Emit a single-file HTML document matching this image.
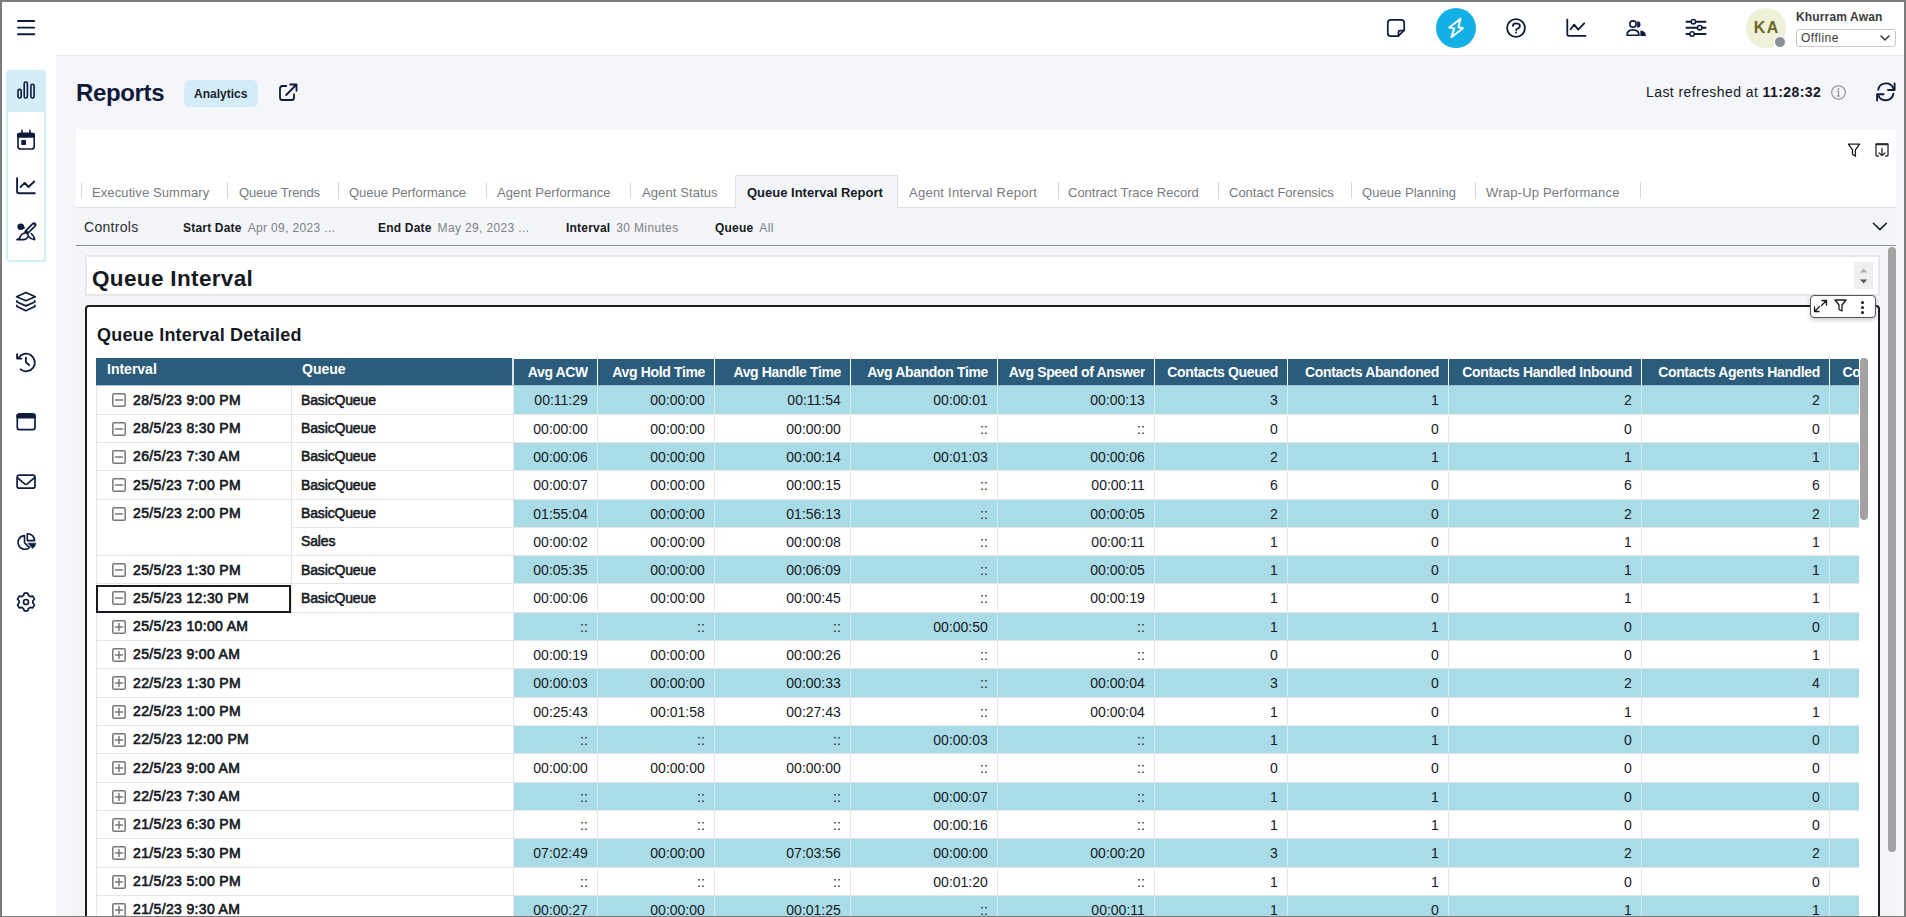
<!DOCTYPE html><html><head><meta charset="utf-8"><style>
*{box-sizing:border-box;margin:0;padding:0}
html,body{width:1906px;height:917px;overflow:hidden;background:#f5f6f9;font-family:"Liberation Sans",sans-serif;position:relative}
.a{position:absolute;white-space:nowrap}
.ic{position:absolute;overflow:visible}
.b{position:absolute}
.tab{position:absolute;top:185px;font-size:13px;line-height:16px;color:#777b80}
.sep{position:absolute;top:182px;width:1px;height:17px;background:#d5d7da}
.cl{position:absolute;top:221px;font-size:12px;line-height:14px;white-space:nowrap}
.cl b{color:#16191f;font-weight:700;letter-spacing:0.2px}
.cl i{font-style:normal;color:#7d8084;margin-left:6px;letter-spacing:0.35px}
.num{position:absolute;text-align:right;padding-right:9.2px;font-size:14px;color:#16191f;border-right:1px solid #e6e6e6;border-bottom:1px solid #e6e6e6;white-space:nowrap;overflow:hidden}
.bl{background:#a9dce6;border-right-color:#d2ebf0}
.hd{position:absolute;top:358px;height:27px;background:#2b5c7c;color:#fff;font-weight:700;font-size:14px;white-space:nowrap;overflow:hidden}
.lc{position:absolute;background:#fff;border-bottom:1px solid #e6e6e6;border-right:1px solid #e6e6e6;font-size:14px;color:#16191f;white-space:nowrap}
</style></head><body>
<div class="b" style="left:0;top:0;width:1906px;height:55px;background:#fff"></div>
<div class="b" style="left:56px;top:55px;width:1850px;height:1px;background:#e9eaed"></div>
<div class="b" style="left:0;top:54px;width:56px;height:870px;background:#fff"></div>
<svg class="ic" style="left:12px;top:14px;width:28px;height:28px" viewBox="12 14 28 28" fill="none" stroke="#0f1b3c" stroke-width="1.9" stroke-linecap="round" stroke-linejoin="round"><path d="M18 21H34.2M18 27.6H34.2M18 34.2H34.2"/></svg>
<svg class="ic" style="left:1384px;top:16px;width:24px;height:24px" viewBox="1384 16 24 24" fill="none" stroke="#0f1b3c" stroke-width="1.7" stroke-linecap="round" stroke-linejoin="round"><path d="M1390.8 19.8H1401.2Q1404.2 19.8 1404.2 22.8V30.2L1398.2 36.2H1390.8Q1387.8 36.2 1387.8 33.2V22.8Q1387.8 19.8 1390.8 19.8Z"/><path d="M1404 30.6H1400Q1398.4 30.6 1398.4 32.2V36"/></svg>
<div class="b" style="left:1436px;top:8px;width:40px;height:40px;border-radius:50%;background:#14b0e5"></div>
<svg class="ic" style="left:1440px;top:12px;width:32px;height:32px" viewBox="1440 12 32 32" fill="none" stroke="#fff" stroke-width="1.9" stroke-linecap="round" stroke-linejoin="round"><path d="M1460.5 18.8L1449.3 27.6L1454.3 28.4L1451.3 37.2L1463 28.2L1458.3 27.3Z"/></svg>
<svg class="ic" style="left:1504px;top:16px;width:24px;height:24px" viewBox="1504 16 24 24" fill="none" stroke="#0f1b3c" stroke-width="1.8" stroke-linecap="round" stroke-linejoin="round"><circle cx="1516" cy="28" r="8.9"/><path d="M1512.9 25.9Q1513 23.3 1516 23.3Q1519.9 23.3 1519.9 26Q1519.9 27.6 1518 28.5Q1516.1 29.3 1516.1 30"/><circle cx="1516.1" cy="32.6" r="1" fill="#0f1b3c" stroke="none"/></svg>
<svg class="ic" style="left:1564px;top:16px;width:24px;height:24px" viewBox="1564 16 24 24" fill="none" stroke="#0f1b3c" stroke-width="1.8" stroke-linecap="round" stroke-linejoin="round"><path d="M1567.3 19.6V34.3Q1567.3 35.9 1568.9 35.9H1585.5"/><path d="M1570.6 29.3L1574.2 24.6L1578.2 29.6L1584.2 23.3"/></svg>
<svg class="ic" style="left:1624px;top:18px;width:24px;height:20px" viewBox="1624 18 24 20" fill="none" stroke="#0f1b3c" stroke-width="2" stroke-linecap="round" stroke-linejoin="round"><circle cx="1633" cy="24.1" r="3.2" stroke-width="1.6"/><path d="M1637.2 21.2A3.25 3.25 0 0 1 1637.2 27.7Z" fill="#0f1b3c" stroke="none"/><path d="M1627 35.2Q1627 29.9 1633 29.9Q1639 29.9 1639 35.2Z" stroke-width="1.6"/><path d="M1640.4 30.4Q1645.9 30.6 1645.9 35.9H1640.4Z" fill="#0f1b3c" stroke="none"/></svg>
<svg class="ic" style="left:1684px;top:16px;width:24px;height:24px" viewBox="1684 16 24 24" fill="none" stroke="#0f1b3c" stroke-width="2" stroke-linecap="round" stroke-linejoin="round"><path d="M1686.5 21.7H1705.5M1686.5 27.7H1705.5M1686.5 34H1705.5" stroke-width="2"/><circle cx="1693.4" cy="21.7" r="2.2" fill="#fff" stroke-width="1.6"/><circle cx="1699.7" cy="27.7" r="2.2" fill="#fff" stroke-width="1.6"/><circle cx="1692.1" cy="34" r="2.2" fill="#fff" stroke-width="1.6"/></svg>
<div class="b" style="left:1746px;top:8px;width:40px;height:40px;border-radius:50%;background:#eef0d7"></div>
<div class="a" style="left:1746px;top:18px;width:40px;text-align:center;font-size:16px;line-height:20px;color:#6b6828;letter-spacing:1.5px;font-weight:700;text-indent:1.5px">KA</div>
<div class="b" style="left:1774px;top:36px;width:12px;height:12px;border-radius:50%;background:#8b8d96;border:1px solid #fff"></div>
<div class="a" style="left:1796px;top:10px;font-size:12px;line-height:15px;font-weight:700;color:#3a3b3e;letter-spacing:0.15px">Khurram Awan</div>
<div class="b" style="left:1796px;top:29px;width:100px;height:18px;border:1px solid #c7c9cc;border-radius:3px;background:#fff"></div>
<div class="a" style="left:1801px;top:31px;font-size:12px;line-height:14px;color:#3a3b3e;letter-spacing:0.5px">Offline</div>
<svg class="ic" style="left:1880px;top:35px;width:10px;height:7px" viewBox="0 0 10 7" fill="none" stroke="#333" stroke-width="1.5" stroke-linecap="round" stroke-linejoin="round"><path d="M1 1L5 5L9 1"/></svg>
<div class="b" style="left:6px;top:70px;width:40px;height:192px;border:2px solid #d3ecf9;border-radius:4px;background:#fff"></div>
<div class="b" style="left:6px;top:70px;width:40px;height:42px;background:#d3eef9;border-radius:4px 4px 0 0"></div>
<svg class="ic" style="left:12px;top:76px;width:28px;height:28px" viewBox="12 76 28 28" fill="none" stroke="#0f1b3c" stroke-width="1.6" stroke-linecap="round" stroke-linejoin="round"><rect x="18" y="89.4" width="3.2" height="8.6" rx="1.6"/><rect x="24.2" y="82" width="3.2" height="16" rx="1.6"/><rect x="30.9" y="84.3" width="3.2" height="13.7" rx="1.6"/></svg>
<svg class="ic" style="left:12px;top:126px;width:28px;height:28px" viewBox="12 126 28 28" fill="none" stroke="#0f1b3c" stroke-width="1.6" stroke-linecap="round" stroke-linejoin="round"><rect x="18" y="133.2" width="16.2" height="15.8" rx="2.6"/><path d="M22 130.4V133M29.9 130.4V133"/><path d="M18 133.5H34.2V137.2H18Z" fill="#0f1b3c" stroke-width="1"/><rect x="21.2" y="140" width="4.8" height="4.9" rx="1" fill="#0f1b3c" stroke="none"/></svg>
<svg class="ic" style="left:12px;top:172px;width:28px;height:28px" viewBox="12 172 28 28" fill="none" stroke="#0f1b3c" stroke-width="1.9" stroke-linecap="round" stroke-linejoin="round"><path d="M17.1 178.2V191.6Q17.1 193.3 18.8 193.3H34.8"/><path d="M20.6 187L24.7 182.9L28.5 187L34.2 181.5"/></svg>
<svg class="ic" style="left:12px;top:218px;width:28px;height:28px" viewBox="12 218 28 28" fill="none" stroke="#0f1b3c" stroke-width="1.6" stroke-linecap="round" stroke-linejoin="round"><path d="M34 224.8L26.8 232" stroke-width="5"/><path d="M33.6 225.2L28.2 230.6" stroke="#fff" stroke-width="1.5"/><path d="M26.2 232.8Q21.2 233.4 20.1 237Q19.6 239.3 16.9 239.6H23.6Q27.6 239.4 28.4 235.2Z" fill="#fff" stroke-width="1.6"/><circle cx="20.7" cy="226.7" r="3.3" fill="#0f1b3c" stroke="none"/><path d="M21.5 223.6L25.4 227.9L22.4 229.6Z" fill="#0f1b3c" stroke="none"/><path d="M31.2 233.5Q34.6 236.5 34.6 239.8Q30.8 239.2 28.9 236.7" stroke-width="1.6"/></svg>
<svg class="ic" style="left:12px;top:286px;width:28px;height:28px" viewBox="12 286 28 28" fill="none" stroke="#0f1b3c" stroke-width="1.7" stroke-linecap="round" stroke-linejoin="round"><path d="M25.9 292.6L35.2 296.8L25.9 300.8L16.6 296.8Z"/><path d="M17 300.8Q16.6 301.6 17 302L25.9 305.9L34.8 302Q35.2 301.6 34.8 300.8"/><path d="M17 305.4Q16.6 306.2 17 306.6L25.9 310.8L34.8 306.6Q35.2 306.2 34.8 305.4"/></svg>
<svg class="ic" style="left:12px;top:346px;width:28px;height:28px" viewBox="12 346 28 28" fill="none" stroke="#0f1b3c" stroke-width="1.8" stroke-linecap="round" stroke-linejoin="round"><path d="M18.6 357.8A8.8 8.8 0 1 1 20.6 369.4"/><path d="M17.1 354.1V358.6H21.4"/><path d="M25.9 357.6V362.2L29.1 365"/></svg>
<svg class="ic" style="left:12px;top:406px;width:28px;height:28px" viewBox="12 406 28 28" fill="none" stroke="#0f1b3c" stroke-width="1.7" stroke-linecap="round" stroke-linejoin="round"><rect x="17.3" y="413.9" width="17.7" height="15.7" rx="2.2"/><path d="M17.3 414.5H35V418H17.3Z" fill="#0f1b3c" stroke-width="1"/></svg>
<svg class="ic" style="left:12px;top:466px;width:28px;height:28px" viewBox="12 466 28 28" fill="none" stroke="#0f1b3c" stroke-width="1.7" stroke-linecap="round" stroke-linejoin="round"><rect x="17.1" y="475.2" width="17.9" height="13" rx="2.3"/><path d="M17.7 478L24.6 483.8Q25.9 484.8 27.2 483.8L34.6 477.6"/></svg>
<svg class="ic" style="left:12px;top:526px;width:28px;height:28px" viewBox="12 526 28 28" fill="none" stroke="#0f1b3c" stroke-width="1.6" stroke-linecap="round" stroke-linejoin="round"><path d="M24.5 535.6A6.85 6.85 0 1 0 29.4 547.6L24.5 542.8Z"/><path d="M27.3 533.7V540.6H34.6A7 7 0 0 0 27.3 533.7Z"/><path d="M28.2 543.2H35.8A7.3 7.3 0 0 1 32.7 548.6Z" fill="#0f1b3c" stroke-width="0.6"/></svg>
<svg class="ic" style="left:12px;top:588px;width:28px;height:28px" viewBox="12 588 28 28" fill="none" stroke="#0f1b3c" stroke-width="1.7" stroke-linecap="round" stroke-linejoin="round"><path d="M23.42 595.60 L24.28 593.17 L27.72 593.17 L28.58 595.60 L30.25 596.56 L32.79 596.10 L34.51 599.07 L32.83 601.04 L32.83 602.96 L34.51 604.93 L32.79 607.90 L30.25 607.44 L28.58 608.40 L27.72 610.83 L24.28 610.83 L23.42 608.40 L21.75 607.44 L19.21 607.90 L17.49 604.93 L19.17 602.96 L19.17 601.04 L17.49 599.07 L19.21 596.10 L21.75 596.56Z"/><circle cx="26" cy="602" r="2.5"/></svg>
<div class="a" style="left:76px;top:78px;font-size:24px;line-height:30px;font-weight:700;color:#101a3b;letter-spacing:-0.35px">Reports</div>
<div class="b" style="left:184px;top:80px;width:74px;height:27px;background:#d2edf9;border-radius:6px"></div>
<div class="a" style="left:194px;top:87px;font-size:12px;line-height:15px;font-weight:700;color:#1b1d2b">Analytics</div>
<svg class="ic" style="left:274px;top:79px;width:28px;height:28px" viewBox="274 79 28 28" fill="none" stroke="#0f1b3c" stroke-width="1.8" stroke-linecap="round" stroke-linejoin="round"><path d="M286.3 86H282.6Q280 86 280 88.6V97.4Q280 100 282.6 100H291.4Q294 100 294 97.4V94.3"/><path d="M290.2 84.5H296.5V90.8M296 85L286.2 95"/></svg>
<div class="a" style="left:1646px;top:84px;font-size:14px;line-height:17px;color:#16191f;letter-spacing:0.42px">Last refreshed at <b>11:28:32</b></div>
<svg class="ic" style="left:1831px;top:85px;width:15px;height:15px" viewBox="0 0 15 15" fill="none" stroke="#8a8a8a" stroke-width="1.1" stroke-linecap="round" stroke-linejoin="round"><circle cx="7.5" cy="7.5" r="6.8"/><path d="M7.5 6.5V11M6.3 11H8.7M6.5 6.5H7.5"/><circle cx="7.5" cy="4.3" r="0.4" fill="#888"/></svg>
<svg class="ic" style="left:1872px;top:78px;width:28px;height:28px" viewBox="1872 78 28 28" fill="none" stroke="#0f1b3c" stroke-width="1.9" stroke-linecap="round" stroke-linejoin="round"><path d="M1878.2 89.8A7.9 7.9 0 0 1 1893.4 88.6"/><path d="M1894.6 83.4V90H1888"/><path d="M1893.4 93.8A7.9 7.9 0 0 1 1878.2 95"/><path d="M1883.6 94.2H1877.1V100.6"/></svg>
<div class="b" style="left:76px;top:129px;width:1820px;height:800px;background:#fff"></div>
<svg class="ic" style="left:1844px;top:140px;width:20px;height:20px" viewBox="1844 140 20 20" fill="none" stroke="#1a1a1a" stroke-width="1.3" stroke-linecap="round" stroke-linejoin="round"><path d="M1848.4 144.2H1859.6L1855.4 149.8V156.2L1852.5 154.3V149.8Z"/></svg>
<svg class="ic" style="left:1872px;top:140px;width:20px;height:20px" viewBox="1872 140 20 20" fill="none" stroke="#2a2a2a" stroke-width="1.3" stroke-linecap="round" stroke-linejoin="round"><path d="M1878.4 156H1877Q1876 156 1876 155V145.2Q1876 144.1 1877 144.1H1887Q1888 144.1 1888 145.2V155Q1888 156 1887 156H1885.6"/><path d="M1876.2 144.3H1887.8" stroke-width="1.9"/><path d="M1882 148.3V155.4M1879.1 152.9L1882 155.6L1884.9 152.9"/></svg>
<div class="b" style="left:76px;top:207px;width:1820px;height:1px;background:#dfe1e4"></div>
<div class="b" style="left:735px;top:175px;width:163px;height:33px;background:#f4f5f8;border:1px solid #dfe1e4;border-bottom:none"></div>
<div class="tab" style="left:92px;letter-spacing:0.1px">Executive Summary</div>
<div class="tab" style="left:239px;letter-spacing:-0.12px">Queue Trends</div>
<div class="tab" style="left:349px;letter-spacing:0px">Queue Performance</div>
<div class="tab" style="left:497px;letter-spacing:0.1px">Agent Performance</div>
<div class="tab" style="left:642px;letter-spacing:0.1px">Agent Status</div>
<div class="tab" style="left:747px;color:#16191f;font-weight:700">Queue Interval Report</div>
<div class="tab" style="left:909px;letter-spacing:0.25px">Agent Interval Report</div>
<div class="tab" style="left:1068px;letter-spacing:0px">Contract Trace Record</div>
<div class="tab" style="left:1229px;letter-spacing:0px">Contact Forensics</div>
<div class="tab" style="left:1362px;letter-spacing:0.05px">Queue Planning</div>
<div class="tab" style="left:1486px;letter-spacing:0.2px">Wrap-Up Performance</div>
<div class="sep" style="left:81px"></div>
<div class="sep" style="left:227px"></div>
<div class="sep" style="left:338px"></div>
<div class="sep" style="left:486px"></div>
<div class="sep" style="left:630px"></div>
<div class="sep" style="left:1058px"></div>
<div class="sep" style="left:1218px"></div>
<div class="sep" style="left:1351px"></div>
<div class="sep" style="left:1475px"></div>
<div class="sep" style="left:1640px"></div>
<div class="b" style="left:76px;top:208px;width:1820px;height:38px;background:#f4f5f8;border-bottom:1px solid #8e9196"></div>
<div class="a" style="left:84px;top:219px;font-size:14px;line-height:17px;color:#2b2d31;letter-spacing:0.3px">Controls</div>
<div class="cl" style="left:183px"><b>Start Date</b><i>Apr 09, 2023 ...</i></div>
<div class="cl" style="left:378px"><b>End Date</b><i>May 29, 2023 ...</i></div>
<div class="cl" style="left:566px"><b>Interval</b><i>30 Minutes</i></div>
<div class="cl" style="left:715px"><b>Queue</b><i>All</i></div>
<svg class="ic" style="left:1868px;top:218px;width:24px;height:16px" viewBox="1868 218 24 16" fill="none" stroke="#16191f" stroke-width="1.5" stroke-linecap="round" stroke-linejoin="round"><path d="M1873.4 223.2L1879.9 229.6L1886.4 223.2"/></svg>
<div class="b" style="left:76px;top:246px;width:1820px;height:680px;background:#f4f5f9"></div>
<div class="b" style="left:1888px;top:247px;width:8px;height:605px;background:#a3a3a6;border-radius:4px"></div>
<div class="b" style="left:85px;top:255px;width:1795px;height:41px;background:#fff;border:2px solid #e7e8ea"></div>
<div class="a" style="left:92px;top:265.5px;font-size:22.5px;line-height:26px;font-weight:700;color:#16191f;letter-spacing:0.35px">Queue Interval</div>
<div class="b" style="left:1854px;top:262px;width:19px;height:27px;background:#efefef"></div>
<svg class="ic" style="left:1854px;top:262px;width:19px;height:27px" viewBox="1854 262 19 27" fill="none" stroke="#0f1b3c" stroke-width="2" stroke-linecap="round" stroke-linejoin="round"><path d="M1860 272.5L1863.6 268.5L1867.2 272.5Z" fill="#aaa" stroke="none"/><path d="M1860 279.5L1863.6 283.5L1867.2 279.5Z" fill="#555" stroke="none"/></svg>
<div class="b" style="left:85px;top:305px;width:1795px;height:640px;background:#fff;border:2.5px solid #1e1f22;border-radius:4px"></div>
<div class="a" style="left:97px;top:324px;font-size:18px;line-height:22px;font-weight:700;color:#16191f;letter-spacing:0.2px">Queue Interval Detailed</div>
<div class="b" style="left:1810px;top:294.5px;width:66px;height:23px;background:#fff;border:1px solid #555;border-radius:4px;box-shadow:0 2px 4px rgba(0,0,0,0.2)"></div>
<svg class="ic" style="left:1813px;top:299px;width:15px;height:14px" viewBox="0 0 15 14" fill="none" stroke="#16191f" stroke-width="1.3" stroke-linecap="round" stroke-linejoin="round"><path d="M9 1.5H13.5V6M13.5 1.5L8.5 6.5M6 12.5H1.5V8M1.5 12.5L6.5 7.5"/></svg>
<svg class="ic" style="left:1834px;top:299px;width:13px;height:13px" viewBox="0 0 13 13" fill="none" stroke="#16191f" stroke-width="1.3" stroke-linecap="round" stroke-linejoin="round"><path d="M1 1H12L8 6V12L5 10.5V6Z"/></svg>
<div class="b" style="left:1861px;top:301px;width:3px;height:3px;border-radius:50%;background:#16191f"></div><div class="b" style="left:1861px;top:306px;width:3px;height:3px;border-radius:50%;background:#16191f"></div><div class="b" style="left:1861px;top:311px;width:3px;height:3px;border-radius:50%;background:#16191f"></div>
<div class="b" style="left:96px;top:358px;width:1763px;height:560px;overflow:hidden">
<div class="hd" style="left:0;top:0;width:416px;"></div>
<div class="b" style="left:416px;top:0;width:2px;height:27px;background:#dde3e7"></div>
<div class="b" style="left:0;top:27px;width:1764px;height:1.3px;background:#a3c3d2"></div>
<div class="a" style="left:11px;top:3px;font-size:14px;line-height:16px;font-weight:700;color:#fff">Interval</div>
<div class="a" style="left:206px;top:3px;font-size:14px;line-height:16px;font-weight:700;color:#fff">Queue</div>
<div class="hd" style="left:418px;top:1px;width:83px;height:26px"></div>
<div class="a" style="left:418px;top:6.300000000000011px;width:74px;text-align:right;font-size:14px;line-height:16px;font-weight:700;color:#fff;overflow:hidden;letter-spacing:-0.35px">Avg ACW</div>
<div class="hd" style="left:502px;top:1px;width:116px;height:26px"></div>
<div class="a" style="left:502px;top:6.300000000000011px;width:107px;text-align:right;font-size:14px;line-height:16px;font-weight:700;color:#fff;overflow:hidden;letter-spacing:-0.35px">Avg Hold Time</div>
<div class="hd" style="left:619px;top:1px;width:135px;height:26px"></div>
<div class="a" style="left:619px;top:6.300000000000011px;width:126px;text-align:right;font-size:14px;line-height:16px;font-weight:700;color:#fff;overflow:hidden;letter-spacing:-0.35px">Avg Handle Time</div>
<div class="hd" style="left:755px;top:1px;width:146px;height:26px"></div>
<div class="a" style="left:755px;top:6.300000000000011px;width:137px;text-align:right;font-size:14px;line-height:16px;font-weight:700;color:#fff;overflow:hidden;letter-spacing:-0.35px">Avg Abandon Time</div>
<div class="hd" style="left:902px;top:1px;width:156px;height:26px"></div>
<div class="a" style="left:902px;top:6.300000000000011px;width:147px;text-align:right;font-size:14px;line-height:16px;font-weight:700;color:#fff;overflow:hidden;letter-spacing:-0.35px">Avg Speed of Answer</div>
<div class="hd" style="left:1059px;top:1px;width:132px;height:26px"></div>
<div class="a" style="left:1059px;top:6.300000000000011px;width:123px;text-align:right;font-size:14px;line-height:16px;font-weight:700;color:#fff;overflow:hidden;letter-spacing:-0.35px">Contacts Queued</div>
<div class="hd" style="left:1192px;top:1px;width:160px;height:26px"></div>
<div class="a" style="left:1192px;top:6.300000000000011px;width:151px;text-align:right;font-size:14px;line-height:16px;font-weight:700;color:#fff;overflow:hidden;letter-spacing:-0.35px">Contacts Abandoned</div>
<div class="hd" style="left:1353px;top:1px;width:192px;height:26px"></div>
<div class="a" style="left:1353px;top:6.300000000000011px;width:183px;text-align:right;font-size:14px;line-height:16px;font-weight:700;color:#fff;overflow:hidden;letter-spacing:-0.35px">Contacts Handled Inbound</div>
<div class="hd" style="left:1546px;top:1px;width:187px;height:26px"></div>
<div class="a" style="left:1546px;top:6.300000000000011px;width:178px;text-align:right;font-size:14px;line-height:16px;font-weight:700;color:#fff;overflow:hidden;letter-spacing:-0.35px">Contacts Agents Handled</div>
<div class="hd" style="left:1734px;top:1px;width:159px;height:26px"></div>
<div class="a" style="left:1746.5px;top:6.300000000000011px;font-size:14px;line-height:16px;font-weight:700;color:#fff;letter-spacing:-0.35px">Contacts Outbound</div>
<div class="lc" style="left:0;top:28.30000000000001px;width:196px;height:28.31px;border-left:1px solid #e6e6e6"></div>
<svg class="ic" style="left:16px;top:35.30000000000001px;width:14px;height:14px" viewBox="0 0 14 14" fill="none" stroke="#777" stroke-width="1.5" stroke-linecap="round" stroke-linejoin="round"><rect x="0.8" y="0.8" width="12.4" height="12.4" rx="1.3"/><path d="M3.5 7H10.5"/></svg>
<div class="a" style="left:37px;top:33.70000000000001px;font-size:14px;line-height:17px;font-weight:400;color:#16191f;letter-spacing:0.35px;-webkit-text-stroke:0.65px #16191f">28/5/23 9:00 PM</div>
<div class="lc" style="left:196px;top:28.30000000000001px;width:222px;height:28.31px"></div>
<div class="a" style="left:205px;top:33.70000000000001px;font-size:14px;line-height:17px;font-weight:400;color:#16191f;letter-spacing:-0.15px;-webkit-text-stroke:0.55px #16191f">BasicQueue</div>
<div class="num bl" style="left:418px;top:28.30000000000001px;width:84px;height:28.31px;line-height:28.31px">00:11:29</div>
<div class="num bl" style="left:502px;top:28.30000000000001px;width:117px;height:28.31px;line-height:28.31px">00:00:00</div>
<div class="num bl" style="left:619px;top:28.30000000000001px;width:136px;height:28.31px;line-height:28.31px">00:11:54</div>
<div class="num bl" style="left:755px;top:28.30000000000001px;width:147px;height:28.31px;line-height:28.31px">00:00:01</div>
<div class="num bl" style="left:902px;top:28.30000000000001px;width:157px;height:28.31px;line-height:28.31px">00:00:13</div>
<div class="num bl" style="left:1059px;top:28.30000000000001px;width:133px;height:28.31px;line-height:28.31px">3</div>
<div class="num bl" style="left:1192px;top:28.30000000000001px;width:161px;height:28.31px;line-height:28.31px">1</div>
<div class="num bl" style="left:1353px;top:28.30000000000001px;width:193px;height:28.31px;line-height:28.31px">2</div>
<div class="num bl" style="left:1546px;top:28.30000000000001px;width:188px;height:28.31px;line-height:28.31px">2</div>
<div class="num bl" style="left:1734px;top:28.30000000000001px;width:160px;height:28.31px;line-height:28.31px"></div>
<div class="lc" style="left:0;top:56.610000000000014px;width:196px;height:28.31px;border-left:1px solid #e6e6e6"></div>
<svg class="ic" style="left:16px;top:63.610000000000014px;width:14px;height:14px" viewBox="0 0 14 14" fill="none" stroke="#777" stroke-width="1.5" stroke-linecap="round" stroke-linejoin="round"><rect x="0.8" y="0.8" width="12.4" height="12.4" rx="1.3"/><path d="M3.5 7H10.5"/></svg>
<div class="a" style="left:37px;top:62.01000000000001px;font-size:14px;line-height:17px;font-weight:400;color:#16191f;letter-spacing:0.35px;-webkit-text-stroke:0.65px #16191f">28/5/23 8:30 PM</div>
<div class="lc" style="left:196px;top:56.610000000000014px;width:222px;height:28.31px"></div>
<div class="a" style="left:205px;top:62.01000000000001px;font-size:14px;line-height:17px;font-weight:400;color:#16191f;letter-spacing:-0.15px;-webkit-text-stroke:0.55px #16191f">BasicQueue</div>
<div class="num" style="left:418px;top:56.610000000000014px;width:84px;height:28.31px;line-height:28.31px">00:00:00</div>
<div class="num" style="left:502px;top:56.610000000000014px;width:117px;height:28.31px;line-height:28.31px">00:00:00</div>
<div class="num" style="left:619px;top:56.610000000000014px;width:136px;height:28.31px;line-height:28.31px">00:00:00</div>
<div class="num" style="left:755px;top:56.610000000000014px;width:147px;height:28.31px;line-height:28.31px">::</div>
<div class="num" style="left:902px;top:56.610000000000014px;width:157px;height:28.31px;line-height:28.31px">::</div>
<div class="num" style="left:1059px;top:56.610000000000014px;width:133px;height:28.31px;line-height:28.31px">0</div>
<div class="num" style="left:1192px;top:56.610000000000014px;width:161px;height:28.31px;line-height:28.31px">0</div>
<div class="num" style="left:1353px;top:56.610000000000014px;width:193px;height:28.31px;line-height:28.31px">0</div>
<div class="num" style="left:1546px;top:56.610000000000014px;width:188px;height:28.31px;line-height:28.31px">0</div>
<div class="num" style="left:1734px;top:56.610000000000014px;width:160px;height:28.31px;line-height:28.31px"></div>
<div class="lc" style="left:0;top:84.92000000000002px;width:196px;height:28.31px;border-left:1px solid #e6e6e6"></div>
<svg class="ic" style="left:16px;top:91.92000000000002px;width:14px;height:14px" viewBox="0 0 14 14" fill="none" stroke="#777" stroke-width="1.5" stroke-linecap="round" stroke-linejoin="round"><rect x="0.8" y="0.8" width="12.4" height="12.4" rx="1.3"/><path d="M3.5 7H10.5"/></svg>
<div class="a" style="left:37px;top:90.32000000000002px;font-size:14px;line-height:17px;font-weight:400;color:#16191f;letter-spacing:0.35px;-webkit-text-stroke:0.65px #16191f">26/5/23 7:30 AM</div>
<div class="lc" style="left:196px;top:84.92000000000002px;width:222px;height:28.31px"></div>
<div class="a" style="left:205px;top:90.32000000000002px;font-size:14px;line-height:17px;font-weight:400;color:#16191f;letter-spacing:-0.15px;-webkit-text-stroke:0.55px #16191f">BasicQueue</div>
<div class="num bl" style="left:418px;top:84.92000000000002px;width:84px;height:28.31px;line-height:28.31px">00:00:06</div>
<div class="num bl" style="left:502px;top:84.92000000000002px;width:117px;height:28.31px;line-height:28.31px">00:00:00</div>
<div class="num bl" style="left:619px;top:84.92000000000002px;width:136px;height:28.31px;line-height:28.31px">00:00:14</div>
<div class="num bl" style="left:755px;top:84.92000000000002px;width:147px;height:28.31px;line-height:28.31px">00:01:03</div>
<div class="num bl" style="left:902px;top:84.92000000000002px;width:157px;height:28.31px;line-height:28.31px">00:00:06</div>
<div class="num bl" style="left:1059px;top:84.92000000000002px;width:133px;height:28.31px;line-height:28.31px">2</div>
<div class="num bl" style="left:1192px;top:84.92000000000002px;width:161px;height:28.31px;line-height:28.31px">1</div>
<div class="num bl" style="left:1353px;top:84.92000000000002px;width:193px;height:28.31px;line-height:28.31px">1</div>
<div class="num bl" style="left:1546px;top:84.92000000000002px;width:188px;height:28.31px;line-height:28.31px">1</div>
<div class="num bl" style="left:1734px;top:84.92000000000002px;width:160px;height:28.31px;line-height:28.31px"></div>
<div class="lc" style="left:0;top:113.23000000000002px;width:196px;height:28.31px;border-left:1px solid #e6e6e6"></div>
<svg class="ic" style="left:16px;top:120.23000000000002px;width:14px;height:14px" viewBox="0 0 14 14" fill="none" stroke="#777" stroke-width="1.5" stroke-linecap="round" stroke-linejoin="round"><rect x="0.8" y="0.8" width="12.4" height="12.4" rx="1.3"/><path d="M3.5 7H10.5"/></svg>
<div class="a" style="left:37px;top:118.63000000000002px;font-size:14px;line-height:17px;font-weight:400;color:#16191f;letter-spacing:0.35px;-webkit-text-stroke:0.65px #16191f">25/5/23 7:00 PM</div>
<div class="lc" style="left:196px;top:113.23000000000002px;width:222px;height:28.31px"></div>
<div class="a" style="left:205px;top:118.63000000000002px;font-size:14px;line-height:17px;font-weight:400;color:#16191f;letter-spacing:-0.15px;-webkit-text-stroke:0.55px #16191f">BasicQueue</div>
<div class="num" style="left:418px;top:113.23000000000002px;width:84px;height:28.31px;line-height:28.31px">00:00:07</div>
<div class="num" style="left:502px;top:113.23000000000002px;width:117px;height:28.31px;line-height:28.31px">00:00:00</div>
<div class="num" style="left:619px;top:113.23000000000002px;width:136px;height:28.31px;line-height:28.31px">00:00:15</div>
<div class="num" style="left:755px;top:113.23000000000002px;width:147px;height:28.31px;line-height:28.31px">::</div>
<div class="num" style="left:902px;top:113.23000000000002px;width:157px;height:28.31px;line-height:28.31px">00:00:11</div>
<div class="num" style="left:1059px;top:113.23000000000002px;width:133px;height:28.31px;line-height:28.31px">6</div>
<div class="num" style="left:1192px;top:113.23000000000002px;width:161px;height:28.31px;line-height:28.31px">0</div>
<div class="num" style="left:1353px;top:113.23000000000002px;width:193px;height:28.31px;line-height:28.31px">6</div>
<div class="num" style="left:1546px;top:113.23000000000002px;width:188px;height:28.31px;line-height:28.31px">6</div>
<div class="num" style="left:1734px;top:113.23000000000002px;width:160px;height:28.31px;line-height:28.31px"></div>
<div class="lc" style="left:0;top:141.54000000000002px;width:196px;height:56.62px;border-left:1px solid #e6e6e6"></div>
<svg class="ic" style="left:16px;top:148.54000000000002px;width:14px;height:14px" viewBox="0 0 14 14" fill="none" stroke="#777" stroke-width="1.5" stroke-linecap="round" stroke-linejoin="round"><rect x="0.8" y="0.8" width="12.4" height="12.4" rx="1.3"/><path d="M3.5 7H10.5"/></svg>
<div class="a" style="left:37px;top:146.94000000000003px;font-size:14px;line-height:17px;font-weight:400;color:#16191f;letter-spacing:0.35px;-webkit-text-stroke:0.65px #16191f">25/5/23 2:00 PM</div>
<div class="lc" style="left:196px;top:141.54000000000002px;width:222px;height:28.31px"></div>
<div class="a" style="left:205px;top:146.94000000000003px;font-size:14px;line-height:17px;font-weight:400;color:#16191f;letter-spacing:-0.15px;-webkit-text-stroke:0.55px #16191f">BasicQueue</div>
<div class="num bl" style="left:418px;top:141.54000000000002px;width:84px;height:28.31px;line-height:28.31px">01:55:04</div>
<div class="num bl" style="left:502px;top:141.54000000000002px;width:117px;height:28.31px;line-height:28.31px">00:00:00</div>
<div class="num bl" style="left:619px;top:141.54000000000002px;width:136px;height:28.31px;line-height:28.31px">01:56:13</div>
<div class="num bl" style="left:755px;top:141.54000000000002px;width:147px;height:28.31px;line-height:28.31px">::</div>
<div class="num bl" style="left:902px;top:141.54000000000002px;width:157px;height:28.31px;line-height:28.31px">00:00:05</div>
<div class="num bl" style="left:1059px;top:141.54000000000002px;width:133px;height:28.31px;line-height:28.31px">2</div>
<div class="num bl" style="left:1192px;top:141.54000000000002px;width:161px;height:28.31px;line-height:28.31px">0</div>
<div class="num bl" style="left:1353px;top:141.54000000000002px;width:193px;height:28.31px;line-height:28.31px">2</div>
<div class="num bl" style="left:1546px;top:141.54000000000002px;width:188px;height:28.31px;line-height:28.31px">2</div>
<div class="num bl" style="left:1734px;top:141.54000000000002px;width:160px;height:28.31px;line-height:28.31px"></div>
<div class="lc" style="left:196px;top:169.85000000000002px;width:222px;height:28.31px"></div>
<div class="a" style="left:205px;top:175.25000000000003px;font-size:14px;line-height:17px;font-weight:400;color:#16191f;letter-spacing:-0.15px;-webkit-text-stroke:0.55px #16191f">Sales</div>
<div class="num" style="left:418px;top:169.85000000000002px;width:84px;height:28.31px;line-height:28.31px">00:00:02</div>
<div class="num" style="left:502px;top:169.85000000000002px;width:117px;height:28.31px;line-height:28.31px">00:00:00</div>
<div class="num" style="left:619px;top:169.85000000000002px;width:136px;height:28.31px;line-height:28.31px">00:00:08</div>
<div class="num" style="left:755px;top:169.85000000000002px;width:147px;height:28.31px;line-height:28.31px">::</div>
<div class="num" style="left:902px;top:169.85000000000002px;width:157px;height:28.31px;line-height:28.31px">00:00:11</div>
<div class="num" style="left:1059px;top:169.85000000000002px;width:133px;height:28.31px;line-height:28.31px">1</div>
<div class="num" style="left:1192px;top:169.85000000000002px;width:161px;height:28.31px;line-height:28.31px">0</div>
<div class="num" style="left:1353px;top:169.85000000000002px;width:193px;height:28.31px;line-height:28.31px">1</div>
<div class="num" style="left:1546px;top:169.85000000000002px;width:188px;height:28.31px;line-height:28.31px">1</div>
<div class="num" style="left:1734px;top:169.85000000000002px;width:160px;height:28.31px;line-height:28.31px"></div>
<div class="lc" style="left:0;top:198.15999999999997px;width:196px;height:28.31px;border-left:1px solid #e6e6e6"></div>
<svg class="ic" style="left:16px;top:205.15999999999997px;width:14px;height:14px" viewBox="0 0 14 14" fill="none" stroke="#777" stroke-width="1.5" stroke-linecap="round" stroke-linejoin="round"><rect x="0.8" y="0.8" width="12.4" height="12.4" rx="1.3"/><path d="M3.5 7H10.5"/></svg>
<div class="a" style="left:37px;top:203.55999999999997px;font-size:14px;line-height:17px;font-weight:400;color:#16191f;letter-spacing:0.35px;-webkit-text-stroke:0.65px #16191f">25/5/23 1:30 PM</div>
<div class="lc" style="left:196px;top:198.15999999999997px;width:222px;height:28.31px"></div>
<div class="a" style="left:205px;top:203.55999999999997px;font-size:14px;line-height:17px;font-weight:400;color:#16191f;letter-spacing:-0.15px;-webkit-text-stroke:0.55px #16191f">BasicQueue</div>
<div class="num bl" style="left:418px;top:198.15999999999997px;width:84px;height:28.31px;line-height:28.31px">00:05:35</div>
<div class="num bl" style="left:502px;top:198.15999999999997px;width:117px;height:28.31px;line-height:28.31px">00:00:00</div>
<div class="num bl" style="left:619px;top:198.15999999999997px;width:136px;height:28.31px;line-height:28.31px">00:06:09</div>
<div class="num bl" style="left:755px;top:198.15999999999997px;width:147px;height:28.31px;line-height:28.31px">::</div>
<div class="num bl" style="left:902px;top:198.15999999999997px;width:157px;height:28.31px;line-height:28.31px">00:00:05</div>
<div class="num bl" style="left:1059px;top:198.15999999999997px;width:133px;height:28.31px;line-height:28.31px">1</div>
<div class="num bl" style="left:1192px;top:198.15999999999997px;width:161px;height:28.31px;line-height:28.31px">0</div>
<div class="num bl" style="left:1353px;top:198.15999999999997px;width:193px;height:28.31px;line-height:28.31px">1</div>
<div class="num bl" style="left:1546px;top:198.15999999999997px;width:188px;height:28.31px;line-height:28.31px">1</div>
<div class="num bl" style="left:1734px;top:198.15999999999997px;width:160px;height:28.31px;line-height:28.31px"></div>
<div class="lc" style="left:0;top:226.47000000000003px;width:196px;height:28.31px;border-left:1px solid #e6e6e6"></div>
<svg class="ic" style="left:16px;top:233.47000000000003px;width:14px;height:14px" viewBox="0 0 14 14" fill="none" stroke="#777" stroke-width="1.5" stroke-linecap="round" stroke-linejoin="round"><rect x="0.8" y="0.8" width="12.4" height="12.4" rx="1.3"/><path d="M3.5 7H10.5"/></svg>
<div class="a" style="left:37px;top:231.87000000000003px;font-size:14px;line-height:17px;font-weight:400;color:#16191f;letter-spacing:0.35px;-webkit-text-stroke:0.65px #16191f">25/5/23 12:30 PM</div>
<div class="lc" style="left:196px;top:226.47000000000003px;width:222px;height:28.31px"></div>
<div class="a" style="left:205px;top:231.87000000000003px;font-size:14px;line-height:17px;font-weight:400;color:#16191f;letter-spacing:-0.15px;-webkit-text-stroke:0.55px #16191f">BasicQueue</div>
<div class="num" style="left:418px;top:226.47000000000003px;width:84px;height:28.31px;line-height:28.31px">00:00:06</div>
<div class="num" style="left:502px;top:226.47000000000003px;width:117px;height:28.31px;line-height:28.31px">00:00:00</div>
<div class="num" style="left:619px;top:226.47000000000003px;width:136px;height:28.31px;line-height:28.31px">00:00:45</div>
<div class="num" style="left:755px;top:226.47000000000003px;width:147px;height:28.31px;line-height:28.31px">::</div>
<div class="num" style="left:902px;top:226.47000000000003px;width:157px;height:28.31px;line-height:28.31px">00:00:19</div>
<div class="num" style="left:1059px;top:226.47000000000003px;width:133px;height:28.31px;line-height:28.31px">1</div>
<div class="num" style="left:1192px;top:226.47000000000003px;width:161px;height:28.31px;line-height:28.31px">0</div>
<div class="num" style="left:1353px;top:226.47000000000003px;width:193px;height:28.31px;line-height:28.31px">1</div>
<div class="num" style="left:1546px;top:226.47000000000003px;width:188px;height:28.31px;line-height:28.31px">1</div>
<div class="num" style="left:1734px;top:226.47000000000003px;width:160px;height:28.31px;line-height:28.31px"></div>
<div class="lc" style="left:0;top:254.77999999999997px;width:418px;height:28.31px;border-left:1px solid #e6e6e6"></div>
<svg class="ic" style="left:16px;top:261.78px;width:14px;height:14px" viewBox="0 0 14 14" fill="none" stroke="#777" stroke-width="1.5" stroke-linecap="round" stroke-linejoin="round"><rect x="0.8" y="0.8" width="12.4" height="12.4" rx="1.3"/><path d="M3.5 7H10.5M7 3.5V10.5"/></svg>
<div class="a" style="left:37px;top:260.17999999999995px;font-size:14px;line-height:17px;font-weight:400;color:#16191f;letter-spacing:0.35px;-webkit-text-stroke:0.65px #16191f">25/5/23 10:00 AM</div>
<div class="num bl" style="left:418px;top:254.77999999999997px;width:84px;height:28.31px;line-height:28.31px">::</div>
<div class="num bl" style="left:502px;top:254.77999999999997px;width:117px;height:28.31px;line-height:28.31px">::</div>
<div class="num bl" style="left:619px;top:254.77999999999997px;width:136px;height:28.31px;line-height:28.31px">::</div>
<div class="num bl" style="left:755px;top:254.77999999999997px;width:147px;height:28.31px;line-height:28.31px">00:00:50</div>
<div class="num bl" style="left:902px;top:254.77999999999997px;width:157px;height:28.31px;line-height:28.31px">::</div>
<div class="num bl" style="left:1059px;top:254.77999999999997px;width:133px;height:28.31px;line-height:28.31px">1</div>
<div class="num bl" style="left:1192px;top:254.77999999999997px;width:161px;height:28.31px;line-height:28.31px">1</div>
<div class="num bl" style="left:1353px;top:254.77999999999997px;width:193px;height:28.31px;line-height:28.31px">0</div>
<div class="num bl" style="left:1546px;top:254.77999999999997px;width:188px;height:28.31px;line-height:28.31px">0</div>
<div class="num bl" style="left:1734px;top:254.77999999999997px;width:160px;height:28.31px;line-height:28.31px"></div>
<div class="lc" style="left:0;top:283.09000000000003px;width:418px;height:28.31px;border-left:1px solid #e6e6e6"></div>
<svg class="ic" style="left:16px;top:290.09000000000003px;width:14px;height:14px" viewBox="0 0 14 14" fill="none" stroke="#777" stroke-width="1.5" stroke-linecap="round" stroke-linejoin="round"><rect x="0.8" y="0.8" width="12.4" height="12.4" rx="1.3"/><path d="M3.5 7H10.5M7 3.5V10.5"/></svg>
<div class="a" style="left:37px;top:288.49px;font-size:14px;line-height:17px;font-weight:400;color:#16191f;letter-spacing:0.35px;-webkit-text-stroke:0.65px #16191f">25/5/23 9:00 AM</div>
<div class="num" style="left:418px;top:283.09000000000003px;width:84px;height:28.31px;line-height:28.31px">00:00:19</div>
<div class="num" style="left:502px;top:283.09000000000003px;width:117px;height:28.31px;line-height:28.31px">00:00:00</div>
<div class="num" style="left:619px;top:283.09000000000003px;width:136px;height:28.31px;line-height:28.31px">00:00:26</div>
<div class="num" style="left:755px;top:283.09000000000003px;width:147px;height:28.31px;line-height:28.31px">::</div>
<div class="num" style="left:902px;top:283.09000000000003px;width:157px;height:28.31px;line-height:28.31px">::</div>
<div class="num" style="left:1059px;top:283.09000000000003px;width:133px;height:28.31px;line-height:28.31px">0</div>
<div class="num" style="left:1192px;top:283.09000000000003px;width:161px;height:28.31px;line-height:28.31px">0</div>
<div class="num" style="left:1353px;top:283.09000000000003px;width:193px;height:28.31px;line-height:28.31px">0</div>
<div class="num" style="left:1546px;top:283.09000000000003px;width:188px;height:28.31px;line-height:28.31px">1</div>
<div class="num" style="left:1734px;top:283.09000000000003px;width:160px;height:28.31px;line-height:28.31px"></div>
<div class="lc" style="left:0;top:311.4px;width:418px;height:28.31px;border-left:1px solid #e6e6e6"></div>
<svg class="ic" style="left:16px;top:318.4px;width:14px;height:14px" viewBox="0 0 14 14" fill="none" stroke="#777" stroke-width="1.5" stroke-linecap="round" stroke-linejoin="round"><rect x="0.8" y="0.8" width="12.4" height="12.4" rx="1.3"/><path d="M3.5 7H10.5M7 3.5V10.5"/></svg>
<div class="a" style="left:37px;top:316.79999999999995px;font-size:14px;line-height:17px;font-weight:400;color:#16191f;letter-spacing:0.35px;-webkit-text-stroke:0.65px #16191f">22/5/23 1:30 PM</div>
<div class="num bl" style="left:418px;top:311.4px;width:84px;height:28.31px;line-height:28.31px">00:00:03</div>
<div class="num bl" style="left:502px;top:311.4px;width:117px;height:28.31px;line-height:28.31px">00:00:00</div>
<div class="num bl" style="left:619px;top:311.4px;width:136px;height:28.31px;line-height:28.31px">00:00:33</div>
<div class="num bl" style="left:755px;top:311.4px;width:147px;height:28.31px;line-height:28.31px">::</div>
<div class="num bl" style="left:902px;top:311.4px;width:157px;height:28.31px;line-height:28.31px">00:00:04</div>
<div class="num bl" style="left:1059px;top:311.4px;width:133px;height:28.31px;line-height:28.31px">3</div>
<div class="num bl" style="left:1192px;top:311.4px;width:161px;height:28.31px;line-height:28.31px">0</div>
<div class="num bl" style="left:1353px;top:311.4px;width:193px;height:28.31px;line-height:28.31px">2</div>
<div class="num bl" style="left:1546px;top:311.4px;width:188px;height:28.31px;line-height:28.31px">4</div>
<div class="num bl" style="left:1734px;top:311.4px;width:160px;height:28.31px;line-height:28.31px"></div>
<div class="lc" style="left:0;top:339.71000000000004px;width:418px;height:28.31px;border-left:1px solid #e6e6e6"></div>
<svg class="ic" style="left:16px;top:346.71000000000004px;width:14px;height:14px" viewBox="0 0 14 14" fill="none" stroke="#777" stroke-width="1.5" stroke-linecap="round" stroke-linejoin="round"><rect x="0.8" y="0.8" width="12.4" height="12.4" rx="1.3"/><path d="M3.5 7H10.5M7 3.5V10.5"/></svg>
<div class="a" style="left:37px;top:345.11px;font-size:14px;line-height:17px;font-weight:400;color:#16191f;letter-spacing:0.35px;-webkit-text-stroke:0.65px #16191f">22/5/23 1:00 PM</div>
<div class="num" style="left:418px;top:339.71000000000004px;width:84px;height:28.31px;line-height:28.31px">00:25:43</div>
<div class="num" style="left:502px;top:339.71000000000004px;width:117px;height:28.31px;line-height:28.31px">00:01:58</div>
<div class="num" style="left:619px;top:339.71000000000004px;width:136px;height:28.31px;line-height:28.31px">00:27:43</div>
<div class="num" style="left:755px;top:339.71000000000004px;width:147px;height:28.31px;line-height:28.31px">::</div>
<div class="num" style="left:902px;top:339.71000000000004px;width:157px;height:28.31px;line-height:28.31px">00:00:04</div>
<div class="num" style="left:1059px;top:339.71000000000004px;width:133px;height:28.31px;line-height:28.31px">1</div>
<div class="num" style="left:1192px;top:339.71000000000004px;width:161px;height:28.31px;line-height:28.31px">0</div>
<div class="num" style="left:1353px;top:339.71000000000004px;width:193px;height:28.31px;line-height:28.31px">1</div>
<div class="num" style="left:1546px;top:339.71000000000004px;width:188px;height:28.31px;line-height:28.31px">1</div>
<div class="num" style="left:1734px;top:339.71000000000004px;width:160px;height:28.31px;line-height:28.31px"></div>
<div class="lc" style="left:0;top:368.02px;width:418px;height:28.31px;border-left:1px solid #e6e6e6"></div>
<svg class="ic" style="left:16px;top:375.02px;width:14px;height:14px" viewBox="0 0 14 14" fill="none" stroke="#777" stroke-width="1.5" stroke-linecap="round" stroke-linejoin="round"><rect x="0.8" y="0.8" width="12.4" height="12.4" rx="1.3"/><path d="M3.5 7H10.5M7 3.5V10.5"/></svg>
<div class="a" style="left:37px;top:373.41999999999996px;font-size:14px;line-height:17px;font-weight:400;color:#16191f;letter-spacing:0.35px;-webkit-text-stroke:0.65px #16191f">22/5/23 12:00 PM</div>
<div class="num bl" style="left:418px;top:368.02px;width:84px;height:28.31px;line-height:28.31px">::</div>
<div class="num bl" style="left:502px;top:368.02px;width:117px;height:28.31px;line-height:28.31px">::</div>
<div class="num bl" style="left:619px;top:368.02px;width:136px;height:28.31px;line-height:28.31px">::</div>
<div class="num bl" style="left:755px;top:368.02px;width:147px;height:28.31px;line-height:28.31px">00:00:03</div>
<div class="num bl" style="left:902px;top:368.02px;width:157px;height:28.31px;line-height:28.31px">::</div>
<div class="num bl" style="left:1059px;top:368.02px;width:133px;height:28.31px;line-height:28.31px">1</div>
<div class="num bl" style="left:1192px;top:368.02px;width:161px;height:28.31px;line-height:28.31px">1</div>
<div class="num bl" style="left:1353px;top:368.02px;width:193px;height:28.31px;line-height:28.31px">0</div>
<div class="num bl" style="left:1546px;top:368.02px;width:188px;height:28.31px;line-height:28.31px">0</div>
<div class="num bl" style="left:1734px;top:368.02px;width:160px;height:28.31px;line-height:28.31px"></div>
<div class="lc" style="left:0;top:396.3299999999999px;width:418px;height:28.31px;border-left:1px solid #e6e6e6"></div>
<svg class="ic" style="left:16px;top:403.3299999999999px;width:14px;height:14px" viewBox="0 0 14 14" fill="none" stroke="#777" stroke-width="1.5" stroke-linecap="round" stroke-linejoin="round"><rect x="0.8" y="0.8" width="12.4" height="12.4" rx="1.3"/><path d="M3.5 7H10.5M7 3.5V10.5"/></svg>
<div class="a" style="left:37px;top:401.7299999999999px;font-size:14px;line-height:17px;font-weight:400;color:#16191f;letter-spacing:0.35px;-webkit-text-stroke:0.65px #16191f">22/5/23 9:00 AM</div>
<div class="num" style="left:418px;top:396.3299999999999px;width:84px;height:28.31px;line-height:28.31px">00:00:00</div>
<div class="num" style="left:502px;top:396.3299999999999px;width:117px;height:28.31px;line-height:28.31px">00:00:00</div>
<div class="num" style="left:619px;top:396.3299999999999px;width:136px;height:28.31px;line-height:28.31px">00:00:00</div>
<div class="num" style="left:755px;top:396.3299999999999px;width:147px;height:28.31px;line-height:28.31px">::</div>
<div class="num" style="left:902px;top:396.3299999999999px;width:157px;height:28.31px;line-height:28.31px">::</div>
<div class="num" style="left:1059px;top:396.3299999999999px;width:133px;height:28.31px;line-height:28.31px">0</div>
<div class="num" style="left:1192px;top:396.3299999999999px;width:161px;height:28.31px;line-height:28.31px">0</div>
<div class="num" style="left:1353px;top:396.3299999999999px;width:193px;height:28.31px;line-height:28.31px">0</div>
<div class="num" style="left:1546px;top:396.3299999999999px;width:188px;height:28.31px;line-height:28.31px">0</div>
<div class="num" style="left:1734px;top:396.3299999999999px;width:160px;height:28.31px;line-height:28.31px"></div>
<div class="lc" style="left:0;top:424.64px;width:418px;height:28.31px;border-left:1px solid #e6e6e6"></div>
<svg class="ic" style="left:16px;top:431.64px;width:14px;height:14px" viewBox="0 0 14 14" fill="none" stroke="#777" stroke-width="1.5" stroke-linecap="round" stroke-linejoin="round"><rect x="0.8" y="0.8" width="12.4" height="12.4" rx="1.3"/><path d="M3.5 7H10.5M7 3.5V10.5"/></svg>
<div class="a" style="left:37px;top:430.03999999999996px;font-size:14px;line-height:17px;font-weight:400;color:#16191f;letter-spacing:0.35px;-webkit-text-stroke:0.65px #16191f">22/5/23 7:30 AM</div>
<div class="num bl" style="left:418px;top:424.64px;width:84px;height:28.31px;line-height:28.31px">::</div>
<div class="num bl" style="left:502px;top:424.64px;width:117px;height:28.31px;line-height:28.31px">::</div>
<div class="num bl" style="left:619px;top:424.64px;width:136px;height:28.31px;line-height:28.31px">::</div>
<div class="num bl" style="left:755px;top:424.64px;width:147px;height:28.31px;line-height:28.31px">00:00:07</div>
<div class="num bl" style="left:902px;top:424.64px;width:157px;height:28.31px;line-height:28.31px">::</div>
<div class="num bl" style="left:1059px;top:424.64px;width:133px;height:28.31px;line-height:28.31px">1</div>
<div class="num bl" style="left:1192px;top:424.64px;width:161px;height:28.31px;line-height:28.31px">1</div>
<div class="num bl" style="left:1353px;top:424.64px;width:193px;height:28.31px;line-height:28.31px">0</div>
<div class="num bl" style="left:1546px;top:424.64px;width:188px;height:28.31px;line-height:28.31px">0</div>
<div class="num bl" style="left:1734px;top:424.64px;width:160px;height:28.31px;line-height:28.31px"></div>
<div class="lc" style="left:0;top:452.95000000000005px;width:418px;height:28.31px;border-left:1px solid #e6e6e6"></div>
<svg class="ic" style="left:16px;top:459.95000000000005px;width:14px;height:14px" viewBox="0 0 14 14" fill="none" stroke="#777" stroke-width="1.5" stroke-linecap="round" stroke-linejoin="round"><rect x="0.8" y="0.8" width="12.4" height="12.4" rx="1.3"/><path d="M3.5 7H10.5M7 3.5V10.5"/></svg>
<div class="a" style="left:37px;top:458.35px;font-size:14px;line-height:17px;font-weight:400;color:#16191f;letter-spacing:0.35px;-webkit-text-stroke:0.65px #16191f">21/5/23 6:30 PM</div>
<div class="num" style="left:418px;top:452.95000000000005px;width:84px;height:28.31px;line-height:28.31px">::</div>
<div class="num" style="left:502px;top:452.95000000000005px;width:117px;height:28.31px;line-height:28.31px">::</div>
<div class="num" style="left:619px;top:452.95000000000005px;width:136px;height:28.31px;line-height:28.31px">::</div>
<div class="num" style="left:755px;top:452.95000000000005px;width:147px;height:28.31px;line-height:28.31px">00:00:16</div>
<div class="num" style="left:902px;top:452.95000000000005px;width:157px;height:28.31px;line-height:28.31px">::</div>
<div class="num" style="left:1059px;top:452.95000000000005px;width:133px;height:28.31px;line-height:28.31px">1</div>
<div class="num" style="left:1192px;top:452.95000000000005px;width:161px;height:28.31px;line-height:28.31px">1</div>
<div class="num" style="left:1353px;top:452.95000000000005px;width:193px;height:28.31px;line-height:28.31px">0</div>
<div class="num" style="left:1546px;top:452.95000000000005px;width:188px;height:28.31px;line-height:28.31px">0</div>
<div class="num" style="left:1734px;top:452.95000000000005px;width:160px;height:28.31px;line-height:28.31px"></div>
<div class="lc" style="left:0;top:481.26px;width:418px;height:28.31px;border-left:1px solid #e6e6e6"></div>
<svg class="ic" style="left:16px;top:488.26px;width:14px;height:14px" viewBox="0 0 14 14" fill="none" stroke="#777" stroke-width="1.5" stroke-linecap="round" stroke-linejoin="round"><rect x="0.8" y="0.8" width="12.4" height="12.4" rx="1.3"/><path d="M3.5 7H10.5M7 3.5V10.5"/></svg>
<div class="a" style="left:37px;top:486.65999999999997px;font-size:14px;line-height:17px;font-weight:400;color:#16191f;letter-spacing:0.35px;-webkit-text-stroke:0.65px #16191f">21/5/23 5:30 PM</div>
<div class="num bl" style="left:418px;top:481.26px;width:84px;height:28.31px;line-height:28.31px">07:02:49</div>
<div class="num bl" style="left:502px;top:481.26px;width:117px;height:28.31px;line-height:28.31px">00:00:00</div>
<div class="num bl" style="left:619px;top:481.26px;width:136px;height:28.31px;line-height:28.31px">07:03:56</div>
<div class="num bl" style="left:755px;top:481.26px;width:147px;height:28.31px;line-height:28.31px">00:00:00</div>
<div class="num bl" style="left:902px;top:481.26px;width:157px;height:28.31px;line-height:28.31px">00:00:20</div>
<div class="num bl" style="left:1059px;top:481.26px;width:133px;height:28.31px;line-height:28.31px">3</div>
<div class="num bl" style="left:1192px;top:481.26px;width:161px;height:28.31px;line-height:28.31px">1</div>
<div class="num bl" style="left:1353px;top:481.26px;width:193px;height:28.31px;line-height:28.31px">2</div>
<div class="num bl" style="left:1546px;top:481.26px;width:188px;height:28.31px;line-height:28.31px">2</div>
<div class="num bl" style="left:1734px;top:481.26px;width:160px;height:28.31px;line-height:28.31px"></div>
<div class="lc" style="left:0;top:509.56999999999994px;width:418px;height:28.31px;border-left:1px solid #e6e6e6"></div>
<svg class="ic" style="left:16px;top:516.5699999999999px;width:14px;height:14px" viewBox="0 0 14 14" fill="none" stroke="#777" stroke-width="1.5" stroke-linecap="round" stroke-linejoin="round"><rect x="0.8" y="0.8" width="12.4" height="12.4" rx="1.3"/><path d="M3.5 7H10.5M7 3.5V10.5"/></svg>
<div class="a" style="left:37px;top:514.9699999999999px;font-size:14px;line-height:17px;font-weight:400;color:#16191f;letter-spacing:0.35px;-webkit-text-stroke:0.65px #16191f">21/5/23 5:00 PM</div>
<div class="num" style="left:418px;top:509.56999999999994px;width:84px;height:28.31px;line-height:28.31px">::</div>
<div class="num" style="left:502px;top:509.56999999999994px;width:117px;height:28.31px;line-height:28.31px">::</div>
<div class="num" style="left:619px;top:509.56999999999994px;width:136px;height:28.31px;line-height:28.31px">::</div>
<div class="num" style="left:755px;top:509.56999999999994px;width:147px;height:28.31px;line-height:28.31px">00:01:20</div>
<div class="num" style="left:902px;top:509.56999999999994px;width:157px;height:28.31px;line-height:28.31px">::</div>
<div class="num" style="left:1059px;top:509.56999999999994px;width:133px;height:28.31px;line-height:28.31px">1</div>
<div class="num" style="left:1192px;top:509.56999999999994px;width:161px;height:28.31px;line-height:28.31px">1</div>
<div class="num" style="left:1353px;top:509.56999999999994px;width:193px;height:28.31px;line-height:28.31px">0</div>
<div class="num" style="left:1546px;top:509.56999999999994px;width:188px;height:28.31px;line-height:28.31px">0</div>
<div class="num" style="left:1734px;top:509.56999999999994px;width:160px;height:28.31px;line-height:28.31px"></div>
<div class="lc" style="left:0;top:537.88px;width:418px;height:28.31px;border-left:1px solid #e6e6e6"></div>
<svg class="ic" style="left:16px;top:544.88px;width:14px;height:14px" viewBox="0 0 14 14" fill="none" stroke="#777" stroke-width="1.5" stroke-linecap="round" stroke-linejoin="round"><rect x="0.8" y="0.8" width="12.4" height="12.4" rx="1.3"/><path d="M3.5 7H10.5M7 3.5V10.5"/></svg>
<div class="a" style="left:37px;top:543.28px;font-size:14px;line-height:17px;font-weight:400;color:#16191f;letter-spacing:0.35px;-webkit-text-stroke:0.65px #16191f">21/5/23 9:30 AM</div>
<div class="num bl" style="left:418px;top:537.88px;width:84px;height:28.31px;line-height:28.31px">00:00:27</div>
<div class="num bl" style="left:502px;top:537.88px;width:117px;height:28.31px;line-height:28.31px">00:00:00</div>
<div class="num bl" style="left:619px;top:537.88px;width:136px;height:28.31px;line-height:28.31px">00:01:25</div>
<div class="num bl" style="left:755px;top:537.88px;width:147px;height:28.31px;line-height:28.31px">::</div>
<div class="num bl" style="left:902px;top:537.88px;width:157px;height:28.31px;line-height:28.31px">00:00:11</div>
<div class="num bl" style="left:1059px;top:537.88px;width:133px;height:28.31px;line-height:28.31px">1</div>
<div class="num bl" style="left:1192px;top:537.88px;width:161px;height:28.31px;line-height:28.31px">0</div>
<div class="num bl" style="left:1353px;top:537.88px;width:193px;height:28.31px;line-height:28.31px">1</div>
<div class="num bl" style="left:1546px;top:537.88px;width:188px;height:28.31px;line-height:28.31px">1</div>
<div class="num bl" style="left:1734px;top:537.88px;width:160px;height:28.31px;line-height:28.31px"></div>
<div class="b" style="left:0;top:227.07000000000002px;width:195.3px;height:27.61px;border:2px solid #16191f"></div>
</div>
<div class="b" style="left:1860px;top:358px;width:8px;height:162px;background:#a3a3a6;border-radius:4px"></div>
<div class="b" style="left:0;top:0;width:1906px;height:2px;background:#7b7b7b"></div>
<div class="b" style="left:0;top:0;width:2px;height:917px;background:#7b7b7b"></div>
<div class="b" style="left:1904px;top:0;width:2px;height:917px;background:#7b7b7b"></div>
<div class="b" style="left:0;top:916px;width:1906px;height:1px;background:#7b7b7b"></div>
</body></html>
